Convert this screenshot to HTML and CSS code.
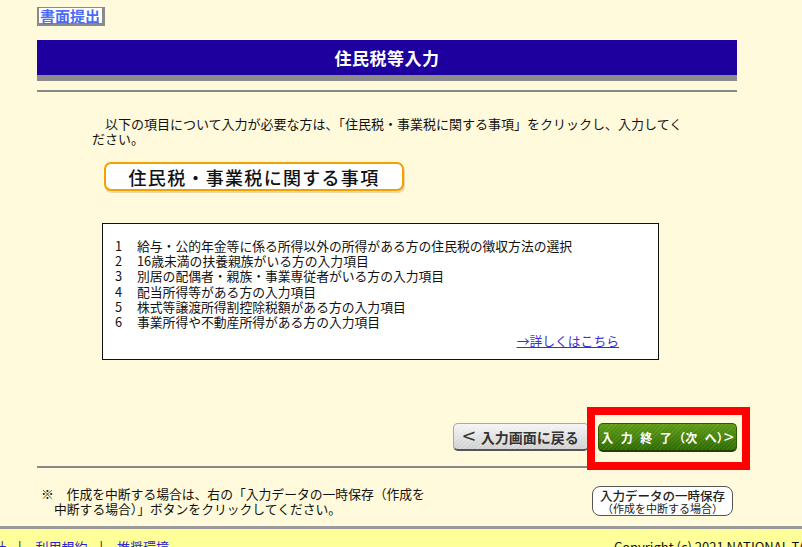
FILE: index.html
```html
<!DOCTYPE html>
<html lang="ja">
<head>
  <meta charset="UTF-8">
  <link rel="stylesheet" href="styles.css">
</head>
<body>
  <div class="page">
    <div class="top">
      <a href="#" class="submit-btn">書面提出</a>
    </div>

    <div class="title-bar">
      <h1>住民税等入力</h1>
    </div>
    <div class="rule"></div>

    <p class="lead">以下の項目について入力が必要な方は、「住民税・事業税に関する事項」をクリックし、入力してく<br>ださい。</p>

    <a href="#" class="section-tag">住民税・事業税に関する事項</a>

    <div class="item-box">
      <ul class="items">
        <li><span class="num">1</span>給与・公的年金等に係る所得以外の所得がある方の住民税の徴収方法の選択</li>
        <li><span class="num">2</span>16歳未満の扶養親族がいる方の入力項目</li>
        <li><span class="num">3</span>別居の配偶者・親族・事業専従者がいる方の入力項目</li>
        <li><span class="num">4</span>配当所得等がある方の入力項目</li>
        <li><span class="num">5</span>株式等譲渡所得割控除税額がある方の入力項目</li>
        <li><span class="num">6</span>事業所得や不動産所得がある方の入力項目</li>
      </ul>
      <div class="more"><a href="#">→詳しくはこちら</a></div>
    </div>

    <div class="nav-buttons">
      <button class="btn-back"><span class="chev">&lt;</span>入力画面に戻る</button>
      <div class="next-wrap">
        <button class="btn-next"><span class="sp">入力終了</span>（<span class="sp">次</span>へ）<span class="chev">&gt;</span></button>
        <span class="highlight"></span>
      </div>
    </div>
    <div class="rule rule-bottom"></div>

    <div class="note-row">
      <p class="note">※　作成を中断する場合は、右の「入力データの一時保存（作成を<br>中断する場合）」ボタンをクリックしてください。</p>
      <button class="btn-save">
        <span class="save-main">入力データの一時保存</span>
        <span class="save-sub">（作成を中断する場合）</span>
      </button>
    </div>
  </div>

  <div class="footer">
    <div class="footer-inner">
      <a href="#" class="cut">計</a>
      <span class="sep">|</span>
      <a href="#">利用規約</a>
      <span class="sep">|</span>
      <a href="#">推奨環境</a>
      <span class="copyright">Copyright (c) 2021 NATIONAL TAX AGENCY</span>
    </div>
  </div>
</body>
</html>
```

FILE: styles.css
```css
body {
  margin: 0;
  background: #fffadb;
  font-family: "Noto Sans CJK JP", "Liberation Sans", sans-serif;
  font-size: 13px;
  color: #111;
  overflow: hidden;
}

.page {
  width: 700px;
  margin-left: 37px;
}

/* 書面提出 */
.top {
  padding-top: 7px;
  height: 19px;
}

.submit-btn {
  display: inline-block;
  box-sizing: border-box;
  height: 19px;
  padding: 0 2px 0 1px;
  background: #fff;
  border-style: solid;
  border-color: #8a8a8a;
  border-width: 1px 3px 3px 2px;
  color: #4c6cf2;
  font-size: 15px;
  font-weight: bold;
  line-height: 15px;
  text-decoration: none;
}

/* タイトル */
.title-bar {
  margin-top: 14px;
  height: 35px;
  background: #1d009e;
  border-bottom: 6px solid #8b8b8b;
  display: flex;
  align-items: center;
  justify-content: center;
}

.title-bar h1 {
  margin: 0;
  color: #fff;
  font-size: 17px;
  font-weight: bold;
  letter-spacing: 0.5px;
}

.rule {
  margin-top: 9px;
  height: 2px;
  background: #888;
}

.lead {
  margin: 24px 0 0 55px;
  width: 620px;
  line-height: 15px;
  font-size: 13px;
  text-indent: 1em;
}

/* 住民税・事業税に関する事項 */
.section-tag {
  display: flex;
  align-items: center;
  justify-content: center;
  box-sizing: border-box;
  width: 300px;
  height: 29px;
  margin: 16px 0 0 67px;
  background: #fff;
  border: 2px solid #f3a100;
  border-radius: 7px;
  box-shadow: 1px 2px 0 #e8d9a8;
  color: #111;
  font-size: 18px;
  font-weight: 500;
  letter-spacing: 1.3px;
  text-decoration: none;
}

.item-box {
  box-sizing: border-box;
  width: 557px;
  height: 137px;
  margin: 32px 0 0 65px;
  padding: 14px 12px 0;
  background: #fff;
  border: 1px solid #111;
}

.items {
  margin: 0;
  padding: 0;
  list-style: none;
}

.items li {
  line-height: 15.2px;
  font-size: 12.8px;
  white-space: nowrap;
}

.num {
  display: inline-block;
  width: 22px;
}

.more {
  text-align: right;
  padding-right: 27px;
  margin-top: 4px;
  line-height: 15px;
}

.more a {
  color: #3a2fd6;
  font-size: 12.8px;
}

/* ボタン */
.nav-buttons {
  margin-top: 63px;
  display: flex;
  justify-content: flex-end;
  align-items: flex-start;
  gap: 9px;
}

button {
  font-family: inherit;
  cursor: pointer;
}

.chev {
  font-weight: normal;
  line-height: 1;
}

.btn-back {
  width: 136px;
  height: 28px;
  padding: 0;
  border: 1px solid #a8a8a8;
  border-bottom: 2px solid #555;
  border-radius: 5px;
  background: repeating-linear-gradient(135deg, rgba(255,255,255,0.25) 0 1px, transparent 1px 3px),
              linear-gradient(#f4f4f4, #cfcfcf);
  color: #333;
  font-size: 14px;
  font-weight: bold;
  display: flex;
  align-items: center;
  justify-content: center;
}

.btn-back .chev {
  font-size: 21px;
  margin: -2px 6px 0 0;
  transform: scaleX(1.1);
}

.next-wrap {
  position: relative;
  display: flex;
}

.btn-next {
  width: 139px;
  height: 29px;
  padding: 0;
  border: 1px solid #2b5a00;
  border-bottom: 2px solid #1f4200;
  border-radius: 5px;
  background: repeating-linear-gradient(135deg, rgba(255,255,255,0.08) 0 1px, transparent 1px 3px),
              linear-gradient(#5e9c16, #2f6b02);
  color: #fff;
  font-size: 12px;
  font-weight: bold;
  font-feature-settings: "halt";
  display: flex;
  align-items: center;
  justify-content: center;
  white-space: nowrap;
}

.btn-next .sp {
  letter-spacing: 7.5px;
}

.btn-next .chev {
  font-size: 18px;
  margin: -2px 0 0 1px;
}

.highlight {
  position: absolute;
  top: -16px;
  left: -11px;
  right: -13px;
  bottom: -18px;
  border: 8px solid #ff0000;
  pointer-events: none;
}

.rule-bottom {
  margin-top: 14px;
}

/* 一時保存 */
.note-row {
  display: flex;
  justify-content: space-between;
  align-items: flex-start;
  margin-top: 18px;
  padding-right: 4px;
}

.note {
  margin: 0 0 0 4px;
  padding-left: 13px;
  text-indent: -13px;
  font-size: 12.8px;
  line-height: 15px;
}

.btn-save {
  box-sizing: border-box;
  width: 141px;
  height: 30px;
  padding: 0;
  border: 1.5px solid #555;
  border-radius: 8px;
  background: #fff;
  color: #222;
  display: flex;
  flex-direction: column;
  align-items: center;
  justify-content: center;
}

.save-main {
  font-size: 12.5px;
  line-height: 13px;
  font-weight: 500;
}

.save-sub {
  font-size: 11px;
  line-height: 12px;
}

/* フッター */
.footer {
  margin-top: 10px;
  border-top: 3px solid #9a9a9a;
  background: #ffff99;
  height: 30px;
  overflow: hidden;
}

.footer-inner {
  display: flex;
  align-items: baseline;
  white-space: nowrap;
  padding-top: 8px;
  font-size: 13px;
}

.footer a {
  color: #2a22cc;
  text-decoration: none;
}

.cut {
  margin-left: -7px;
}

.sep {
  margin: 0 14px 0 12px;
}

.copyright {
  margin-left: auto;
  flex-shrink: 0;
  position: relative;
  left: 64px;
  color: #111;
}
```
